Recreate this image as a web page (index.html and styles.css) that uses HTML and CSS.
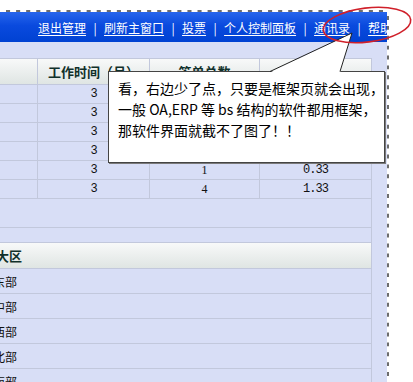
FILE: index.html
```html
<!DOCTYPE html>
<html lang="zh-CN">
<head>
  <meta charset="UTF-8" />
  <title>框架页截图</title>
  <link rel="stylesheet" href="styles.css">
</head>
<body>
<div class="page">
  <div class="frame">
    <div class="topbar">
      <a href="#">退出管理</a><span class="sep">|</span>
      <a href="#">刷新主窗口</a><span class="sep">|</span>
      <a href="#">投票</a><span class="sep">|</span>
      <a href="#">个人控制面板</a><span class="sep">|</span>
      <a href="#">通讯录</a><span class="sep">|</span>
      <a href="#">帮助</a>
    </div>
    <div class="content">
      <div class="panel">
        <div class="grid">
          <div class="row head">
            <div class="cell c0"></div>
            <div class="cell c1">工作时间（月）</div>
            <div class="cell c2">答单总数</div>
            <div class="cell c3"></div>
          </div>
          <div class="row"><div class="cell c0"></div><div class="cell c1 mono">3</div><div class="cell c2"></div><div class="cell c3"></div></div>
          <div class="row"><div class="cell c0"></div><div class="cell c1 mono">3</div><div class="cell c2"></div><div class="cell c3"></div></div>
          <div class="row"><div class="cell c0"></div><div class="cell c1 mono">3</div><div class="cell c2"></div><div class="cell c3"></div></div>
          <div class="row"><div class="cell c0"></div><div class="cell c1 mono">3</div><div class="cell c2"></div><div class="cell c3"></div></div>
          <div class="row"><div class="cell c0"></div><div class="cell c1 mono">3</div><div class="cell c2 serif">1</div><div class="cell c3 mono">0.33</div></div>
          <div class="row"><div class="cell c0"></div><div class="cell c1 mono">3</div><div class="cell c2 serif">4</div><div class="cell c3 mono">1.33</div></div>
          <div class="row foot"></div>
        </div>
        <div class="gap"></div>
        <div class="grid">
          <div class="row head wide"><div class="label">大区</div></div>
          <div class="row tall"><div class="name">东部</div></div>
          <div class="row tall"><div class="name">中部</div></div>
          <div class="row tall"><div class="name">西部</div></div>
          <div class="row tall"><div class="name">北部</div></div>
          <div class="row tall"><div class="name">南部</div></div>
        </div>
      </div>
    </div>
  </div>

  <div class="callout">
    <div>看，右边少了点，只要是框架页就会出现，</div>
    <div>一般 OA,ERP 等 bs 结构的软件都用框架，</div>
    <div>那软件界面就截不了图了！！</div>
  </div>

  <svg class="marks" width="413" height="382" viewBox="0 0 413 382">
    <polygon points="270,72.5 352,33 340,72.5" fill="#fff"/>
    <polyline points="270,71.5 352,33 340,71.5" fill="none" stroke="#222" stroke-width="1"/>
    <ellipse cx="367" cy="25" rx="44" ry="17" transform="rotate(-7 367 25)" fill="none" stroke="#d0202a" stroke-width="1.6"/>
  </svg>
</div>
</body>
</html>
```

FILE: styles.css
```css
html, body {
  margin: 0;
  height: 100%;
}
body {
  background: #fff;
  overflow: hidden;
  font-family: "Noto Sans CJK SC", sans-serif;
  font-size: 12px;
  color: #111;
}
.page {
  position: relative;
  width: 413px;
  height: 382px;
  overflow: hidden;
}
.frame {
  margin-top: 10px;
  width: 389px;
  height: 372px;
  box-sizing: border-box;
  border-top: 2px dashed #fff;
  border-right: 2px dashed #fff;
  background: #6d6d6d;
  display: flex;
  flex-direction: column;
  overflow: hidden;
}
.topbar {
  flex: none;
  height: 30px;
  padding-left: 38px;
  display: flex;
  align-items: center;
  white-space: nowrap;
  overflow: hidden;
  background: linear-gradient(#2766ec, #0a4ade 45%, #0042d2);
}
.topbar a {
  flex: none;
  color: #fff;
  text-decoration: underline;
  text-underline-offset: 2px;
}
.sep {
  flex: none;
  width: 18px;
  text-align: center;
  color: #fff;
}
.content {
  flex: 1;
  background: #d8def6;
  padding-top: 16px;
  overflow: hidden;
}
.panel {
  margin-left: -82px;
  width: 453px;
  min-height: 340px;
  border-right: 1px solid #c2c8dc;
}
.grid {
  border-top: 1px solid #c2c8dc;
}
.row {
  display: flex;
  height: 18px;
  border-bottom: 1px solid #c2c8dc;
}
.row.head {
  height: 25px;
  background: linear-gradient(#f8f9f9, #dfe5e3);
  font-size: 13px;
  font-weight: bold;
  color: #10302a;
}
.row.foot {
  height: 28px;
}
.row.tall {
  height: 24px;
}
.gap {
  height: 14px;
}
.cell {
  display: flex;
  align-items: center;
  justify-content: center;
  box-sizing: border-box;
  border-right: 1px solid #c2c8dc;
}
.c0 { width: 120px; }
.c1 { width: 112px; }
.c2 { width: 110px; }
.c3 { width: 111px; border-right: none; }
.mono {
  font-family: "Liberation Mono", monospace;
  letter-spacing: -1px;
}
.serif {
  font-family: "Liberation Serif", serif;
}
.label {
  padding-left: 78px;
  line-height: 25px;
}
.name {
  padding-left: 75px;
  line-height: 26px;
}
.callout {
  position: absolute;
  left: 108px;
  top: 71px;
  width: 277px;
  height: 92px;
  box-sizing: border-box;
  padding: 6px 0 0 9px;
  background: #fff;
  border: 1px solid #444;
  box-shadow: 1px 1px 0 #7a7a7a;
  font-size: 14px;
  line-height: 21px;
  color: #000;
  white-space: nowrap;
}
.marks {
  position: absolute;
  left: 0;
  top: 0;
  pointer-events: none;
}
```
